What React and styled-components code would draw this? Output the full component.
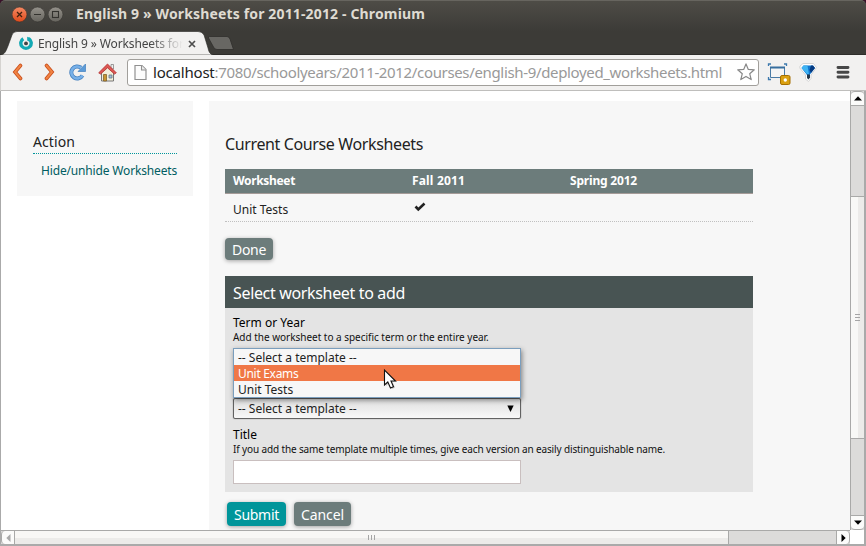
import React from 'react';
import styled, { createGlobalStyle } from 'styled-components';

const Global = createGlobalStyle`
  *, *::before, *::after { box-sizing: border-box; }
  body { margin: 0; overflow: hidden; font-family: "Noto Sans", sans-serif; font-size: 12px; color: #222; }
`;

/* ---------- window ---------- */
const Window = styled.div`
  width: 866px; height: 546px; display: flex; flex-direction: column; overflow: hidden;
  background: #3c3b37; border-radius: 5px 5px 0 0; box-shadow: 0 0 0 8px #3a1029;
`;
const TitleBar = styled.header`
  height: 31px; flex: none; display: flex; align-items: center; gap: 2px; padding: 0 0 4px 12px;
  background: linear-gradient(#4e4c46, #3c3b37); border-top: 1px solid #67655f;
  border-radius: 5px 5px 0 0;
`;
const WindowTitle = styled.h1`
  margin: 0 0 0 10px; font-size: 14px; line-height: 20px; letter-spacing: 0.147px; color: #dfdbd2; font-weight: 700;
`;
const TabStrip = styled.div`
  height: 24px; flex: none; display: flex; background: #3c3b37;
  border-bottom: 1px solid #2e2d2a;
`;
const Tab = styled.div`
  position: relative; width: 213px; height: 24px; flex: none; display: flex; align-items: center;
  padding: 1px 0 0 18px;
`;
const TabShape = styled.svg`position: absolute; left: 0; top: 0;`;
const TabIcon = styled.svg`position: relative; flex: none;`;
const TabTitle = styled.span`
  position: relative; margin-left: 5px; width: 146px; overflow: hidden; white-space: nowrap;
  line-height: 18px; letter-spacing: -0.12px; color: #444;
  mask-image: linear-gradient(90deg, #000 112px, transparent 145px);
`;
const TabClose = styled.svg`position: relative; margin-left: 4px;`;
const NewTab = styled.svg`margin: 4px 0 0 -7px; position: relative;`;

const Toolbar = styled.nav`
  height: 36px; flex: none; display: flex; align-items: center; padding: 0 0 1px 10px;
  background: #f2f1f0; border-bottom: 1px solid #bfbebc; border-left: 1px solid #d5d3d0;
`;
const NavIcon = styled.svg`flex: none; margin-right: ${p => p.$gap || 0}px;`;
const AddressBar = styled.div`
  width: 632px; height: 27px; display: flex; align-items: center; padding: 0 3px 0 6px;
  background: #fff; border: 1px solid #a19f9b; border-radius: 3px;
`;
const Url = styled.span`
  flex: 1; margin-left: 6px; font-size: 15px; line-height: 22px; letter-spacing: -0.345px; color: #999; white-space: nowrap;
`;
const Host = styled.span`color: #222; letter-spacing: -0.2px;`;

/* ---------- viewport and scrollbars ---------- */
const Body = styled.div`
  flex: 1; min-height: 0; display: grid; grid-template-columns: 849px 14px; grid-template-rows: 439px 14px;
  background: #fff; border: solid #aaa; border-width: 0 2px 2px 1px;
`;
const Viewport = styled.main`display: flex; gap: 16px; padding: 10px 0 0 16px; overflow: hidden; background: #fff;`;
const VScroll = styled.div`
  display: flex; flex-direction: column; background: #dcdbda; border-left: 1px solid #a9a9a8;
`;
const HScroll = styled.div`display: flex; background: #dcdbda; border-top: 1px solid #a9a9a8;`;
const VButton = styled.div`
  height: 15px; flex: none; display: flex; align-items: center; justify-content: center; background: #fbfbfa;
  border: solid #a9a9a8; border-width: 1px 0;
  border-radius: ${p => (p.$end ? '0 0 4px 4px' : '4px 4px 0 0')};
`;
const HButton = styled.div`
  width: 14px; flex: none; display: flex; align-items: center; justify-content: center; background: #fbfbfa;
  border: solid #a9a9a8; border-width: 0 1px;
  border-radius: ${p => (p.$end ? '0 4px 4px 0' : '4px 0 0 4px')};
`;
const Track = styled.div`flex: ${p => p.$grow || 'none'}; height: ${p => p.$h || 0}px;`;
const VThumb = styled.div`
  height: 243px; flex: none; display: flex; flex-direction: column; align-items: center; justify-content: center; gap: 2px;
  background: linear-gradient(90deg, #f8f8f6 7px, #ecebe9 7px); border: solid #a9a9a8; border-width: 1px 0;
`;
const HThumb = styled.div`
  width: 714px; flex: none; display: flex; align-items: center; justify-content: center; gap: 2px;
  background: linear-gradient(#f8f7f5 7px, #ecebe9 7px); border-right: 1px solid #a9a9a8;
`;
const Grip = styled.i`
  width: ${p => (p.$v ? 1 : 5)}px; height: ${p => (p.$v ? 5 : 1)}px; background: #a5a5a5;
`;
const Corner = styled.div`background: #fff;`;

/* ---------- page ---------- */
const Sidebar = styled.aside`
  width: 176px; height: 95px; flex: none; padding: 30px 16px 0; background: #f7f7f7;
`;
const SideTitle = styled.h2`
  margin: 0 0 8px; height: 23px; font-size: 14px; line-height: 21px; font-weight: 400; letter-spacing: 0.09px;
  border-bottom: 1px dotted #00959a;
`;
const SideLink = styled.a`
  display: block; padding-left: 8px; line-height: 18px; letter-spacing: -0.161px; color: #005d62; white-space: nowrap;
`;
const Content = styled.section`flex: 1; padding: 30px 97px 0 16px; background: #f7f7f7;`;
const Heading = styled.h2`
  margin: 0 0 12px; font-size: 16px; line-height: 26px; font-weight: 400; letter-spacing: -0.372px;
`;
const Table = styled.div`display: flex; flex-direction: column;`;
const Row = styled.div`
  display: grid; grid-template-columns: 179px 158px 191px; height: 28px; align-items: center;
  padding-top: 4px; border-bottom: 1px dotted #c0c0c0;
`;
const HeadRow = styled(Row)`
  height: 25px; padding: 0 0 1px; font-weight: 700; color: #fff; background: #6c7c7b; border-bottom: 1px solid #a59b98;
`;
const Cell = styled.div`padding-left: 8px; line-height: 18px; letter-spacing: ${p => p.$ls || 0}px;`;
const Check = styled.svg`display: block; margin: -5px 0 0 2px;`;
const Button = styled.button`
  height: ${p => p.$h || 24}px; width: ${p => p.$w}px; padding: 1px 0 0; border: 0; border-radius: 4px; color: #fff;
  background: ${p => (p.$primary ? '#00959a' : '#6c7c7b')}; box-shadow: 0 1px 4px rgba(0,0,0,.35);
  font: 14px/21px "Noto Sans", sans-serif; letter-spacing: ${p => p.$ls}px; text-align: center;
`;
const TableActions = styled.div`display: flex; margin-top: 16px;`;
const Form = styled.form`margin-top: 16px;`;
const FormTitle = styled.h3`
  margin: 0; height: 32px; padding: 0 8px; font-size: 16px; line-height: 34px; font-weight: 400; letter-spacing: -0.339px;
  color: #fff; background: #485453;
`;
const Fields = styled.div`height: 184px; padding: 7px 8px 0; background: #e4e4e4;`;
const Label = styled.label`display: block; height: 15px; line-height: 15px; color: #000;`;
const Hint = styled.div`
  height: 14px; font-size: 10px; line-height: 14px; letter-spacing: ${p => p.$ls}px; color: #111; white-space: nowrap;
`;
const SelectGroup = styled.div`position: relative; width: 288px; margin: 54px 0 8px;`;
const Select = styled.div`
  height: 21px; display: flex; align-items: center; justify-content: space-between; padding: 0 6px 0 4px;
  border: 1px solid #626262; border-radius: 2px; background: linear-gradient(#dedede, #f8f8f8);
  box-shadow: 0 0 1px #555; line-height: 18px;
`;
const Menu = styled.ul`
  position: absolute; left: 0; top: -50px; width: 288px; height: 50px; margin: 0; padding: 0; list-style: none;
  background: #f7f7f7; border: 1px solid #7b9ebd; box-shadow: 1px 2px 5px rgba(0,0,0,.45);
`;
const Option = styled.li`
  height: 16px; padding: 1px 0 0 4px; line-height: 15px; letter-spacing: ${p => p.$ls || 0}px;
  color: ${p => (p.$active ? '#fff' : '#222')}; background: ${p => (p.$active ? '#f07746' : 'transparent')};
`;
const Pointer = styled.svg`position: absolute; left: 150px; top: -29px; overflow: visible;`;
const Input = styled.input`
  display: block; width: 288px; height: 24px; margin-top: 4px; padding: 0 4px; border: 1px solid #c9bfbf; background: #fff;
`;
const FormActions = styled.div`display: flex; gap: 8px; padding: 10px 2px;`;

function WinButton({ kind }) {
  const close = kind === 'close';
  return (
    <svg width="16" height="18" viewBox="0 0 16 18">
      <defs>
        <linearGradient id={'wb' + kind} x1="0" y1="0" x2="0" y2="1">
          <stop offset="0" stopColor={close ? '#f58a64' : '#94918a'} />
          <stop offset="1" stopColor={close ? '#e04a1b' : '#66645e'} />
        </linearGradient>
      </defs>
      <circle cx="7.5" cy="9.5" r="7.400" fill={'url(#wb' + kind + ')'} stroke="#32312d" strokeWidth=".5" />
      {close && <path d="M5 7l5 5M10 7l-5 5" stroke="#42210f" strokeWidth="1.3" />}
      {kind === 'min' && <path d="M4 9.500h7" stroke="#33322e" strokeWidth="1.2" />}
      {kind === 'max' && <rect x="4.500" y="6.500" width="6" height="6" fill="none" stroke="#33322e" strokeWidth="1.1" />}
    </svg>
  );
}

export default function App() {
  return (
    <Window>
      <Global />
      <TitleBar>
        <WinButton kind="close" />
        <WinButton kind="min" />
        <WinButton kind="max" />
        <WindowTitle>English 9 » Worksheets for 2011-2012 - Chromium</WindowTitle>
      </TitleBar>
      <TabStrip>
        <Tab>
          <TabShape width="213" height="24" viewBox="0 0 213 24">
            <path d="M1 24C5 23 6 20 8 15L12 4Q13 .5 17 .5H198Q202 .5 204 4L208 17Q209 23 213 24Z" fill="#f2f1f0" stroke="#292825" strokeWidth=".6" />
          </TabShape>
          <TabIcon width="15" height="15" viewBox="0 0 15 15">
            <path d="M5.300 2.700A5.200 5.200 0 1 0 10.700 2.700" fill="none" stroke="#13a9b4" strokeWidth="3.400" />
            <path d="M9.200 .800L12.500 2 11 5.500 9.200 4.500Z" fill="#13a9b4" />
            <circle cx="8" cy="7.400" r="1.900" fill="#444" />
          </TabIcon>
          <TabTitle>English 9 » Worksheets for</TabTitle>
          <TabClose width="8" height="8" viewBox="0 0 8 8">
            <path d="M1 1l6 6M7 1l-6 6" stroke="#4e4e4e" strokeWidth="1.7" />
          </TabClose>
        </Tab>
        <NewTab width="30" height="17" viewBox="0 0 30 17">
          <path d="M3.500 1.500H21Q23 1.500 24 4L27.500 14.500H11Q8.500 14.500 7.500 12L2.500 3Q2 1.500 3.500 1.500Z" fill="#686763" stroke="#302f2c" strokeWidth=".8" />
        </NewTab>
      </TabStrip>
      <Toolbar>
        <NavIcon $gap={18} width="14" height="18" viewBox="0 0 14 18">
          <path d="M9.500 2.500L4 9l5.500 6.500" fill="none" stroke="#c84d1c" strokeWidth="3.600" strokeLinecap="round" />
          <path d="M9.500 2.500L4 9l5.500 6.500" fill="none" stroke="#f18443" strokeWidth="2" strokeLinecap="round" />
        </NavIcon>
        <NavIcon $gap={12} width="14" height="18" viewBox="0 0 14 18">
          <path d="M3.500 2.500L9 9l-5.500 6.500" fill="none" stroke="#c84d1c" strokeWidth="3.600" strokeLinecap="round" />
          <path d="M3.500 2.500L9 9l-5.500 6.500" fill="none" stroke="#f18443" strokeWidth="2" strokeLinecap="round" />
        </NavIcon>
        <NavIcon $gap={12} width="17" height="18" viewBox="0 0 17 18">
          <path d="M12 4.700A6 6 0 1 0 13.500 12.500" fill="none" stroke="#437fbd" strokeWidth="4" />
          <path d="M16.500 1v7.500H9Z" fill="#5c9bd8" stroke="#437fbd" strokeWidth=".7" />
          <path d="M12 4.700A6 6 0 1 0 13.500 12.500" fill="none" stroke="#77b0e8" strokeWidth="2.600" />
        </NavIcon>
        <NavIcon $gap={10} width="19" height="19" viewBox="0 0 19 19">
          <path d="M3.500 9.500L9.500 4l6 5.500V18h-12Z" fill="#f2eeda" stroke="#777" />
          <path d="M13 1.500h2.500V6H13Z" fill="#eee" stroke="#777" strokeWidth=".7" />
          <path d="M.7 9.800L9.500 1l8.800 8.800-1.800 1.300-7-6.300-7 6.300Z" fill="#dc5753" stroke="#b4302e" strokeWidth=".8" />
          <path d="M5.500 11.500h3V18h-3Z" fill="#c99530" stroke="#755721" strokeWidth=".7" />
          <path d="M11 12h3v3h-3Z" fill="#9ebddd" stroke="#6d7880" strokeWidth=".8" />
        </NavIcon>
        <AddressBar>
          <NavIcon width="13" height="17" viewBox="0 0 13 17">
            <path d="M1 1.500h7l4 4v10H1Z" fill="#fcfcfc" stroke="#909090" strokeWidth="1.200" />
            <path d="M7.500 1.500V6H12" fill="#eee" stroke="#909090" strokeWidth="1.100" />
          </NavIcon>
          <Url><Host>localhost</Host>:7080/schoolyears/2011-2012/courses/english-9/deployed_worksheets.html</Url>
          <NavIcon width="18" height="18" viewBox="0 0 18 18">
            <path d="M9 .9l2.300 5.500 6 .4-4.600 3.900 1.500 5.900L9 13.400l-5.200 3.200 1.500-5.900L.7 6.800l6-.4Z" fill="#fff" stroke="#888" strokeWidth="1.200" strokeLinejoin="round" />
          </NavIcon>
        </AddressBar>
        <NavIcon $gap={8} width="32" height="26" viewBox="0 0 32 26">
          <path d="M9.500 7V5h2.500M25 5h2.500v2M9.500 18v2.500h2.500" fill="none" stroke="#3d79ad" strokeWidth="1.300" />
          <path d="M11.500 8.500h14v10h-14Z" fill="#f5f5f5" stroke="#4a7ba5" strokeWidth="1" />
          <path d="M11 8.500h15" stroke="#376e9e" strokeWidth="2" />
          <rect x="21.500" y="16.500" width="9.500" height="9" rx="1.500" fill="#daa010" stroke="#a66f00" />
          <circle cx="26.300" cy="21" r="1.700" fill="#fff" />
        </NavIcon>
        <NavIcon $gap={19} width="18" height="20" viewBox="0 0 18 20">
          <path d="M4 1.500h10.500L17.500 5.500 12 13v3.500L9.500 19.500 6.500 17V13L.8 6 1 4Z" fill="#fff" stroke="#d4d4d4" />
          <path d="M4.500 3.500h9.500L16 6 10.500 13h-2.500L2.500 6Z" fill="#1277d0" />
          <path d="M4.500 3.500h4L10 12.500 8 12 2.500 6Z" fill="#3fb4f3" />
          <path d="M12 3.500h2L16 6l-4 5-1.500-3Z" fill="#063a80" />
          <path d="M8 12.500h3v3L9.500 17.500 8 16Z" fill="#26384a" />
        </NavIcon>
        <NavIcon width="14" height="14" viewBox="0 0 14 14">
          <path d="M2 2.500h10M2 7.300h10M2 12h10" stroke="#474747" strokeWidth="2.900" strokeLinecap="round" />
        </NavIcon>
      </Toolbar>
      <Body>
        <Viewport>
          <Sidebar>
            <SideTitle>Action</SideTitle>
            <SideLink>Hide/unhide Worksheets</SideLink>
          </Sidebar>
          <Content>
            <Heading>Current Course Worksheets</Heading>
            <Table>
              <HeadRow>
                <Cell $ls={-0.336}>Worksheet</Cell>
                <Cell $ls={0.166}>Fall 2011</Cell>
                <Cell $ls={-0.192}>Spring 2012</Cell>
              </HeadRow>
              <Row>
                <Cell>Unit Tests</Cell>
                <Cell>
                  <Check width="12" height="10" viewBox="0 0 12 10">
                    <path d="M1.500 4.500L4.300 7.500 10.500 1.500" fill="none" stroke="#222" strokeWidth="2.600" />
                  </Check>
                </Cell>
                <Cell />
              </Row>
            </Table>
            <TableActions>
              <Button $w={48} $h={22} $ls={-0.309}>Done</Button>
            </TableActions>
            <Form>
              <FormTitle>Select worksheet to add</FormTitle>
              <Fields>
                <Label>Term or Year</Label>
                <Hint $ls={-0.02}>Add the worksheet to a specific term or the entire year.</Hint>
                <SelectGroup>
                  <Select>
                    -- Select a template --
                    <svg width="7" height="8" viewBox="0 0 7 8"><path d="M.3.500h6.400L3.500 7Z" fill="#000" /></svg>
                  </Select>
                  <Menu>
                    <Option>-- Select a template --</Option>
                    <Option $active $ls={-0.3}>Unit Exams</Option>
                    <Option>Unit Tests</Option>
                  </Menu>
                  <Pointer width="15" height="22" viewBox="0 0 15 22">
                    <path d="M2 1.500V16l3.300-3 2.700 6 3-1.300L8.500 12H13Z" fill="#777" opacity=".35" transform="translate(1 1)" />
                    <path d="M1.500 1V16l3.300-3 2.700 6 3-1.300L8 12h4.500Z" fill="#fff" stroke="#111" strokeWidth="1.100" />
                  </Pointer>
                </SelectGroup>
                <Label>Title</Label>
                <Hint $ls={-0.13}>If you add the same template multiple times, give each version an easily distinguishable name.</Hint>
                <Input />
              </Fields>
              <FormActions>
                <Button type="button" $primary $w={59} $ls={-0.284}>Submit</Button>
                <Button type="button" $w={57} $ls={-0.097}>Cancel</Button>
              </FormActions>
            </Form>
          </Content>
        </Viewport>
        <VScroll>
          <VButton><svg width="8" height="5" viewBox="0 0 8 5"><path d="M0 4.500L4 .300 8 4.500Z" /></svg></VButton>
          <Track $h={90} />
          <VThumb><Grip /><Grip /><Grip /></VThumb>
          <Track $grow={1} />
          <VButton $end><svg width="8" height="5" viewBox="0 0 8 5"><path d="M0 .500h8L4 4.700Z" /></svg></VButton>
        </VScroll>
        <HScroll>
          <HButton><svg width="5" height="8" viewBox="0 0 5 8"><path d="M4.500 0v8L.300 4Z" fill="#aaa" /></svg></HButton>
          <HThumb><Grip $v /><Grip $v /><Grip $v /></HThumb>
          <Track $grow={1} />
          <HButton $end><svg width="5" height="8" viewBox="0 0 5 8"><path d="M.500 0v8L4.700 4Z" /></svg></HButton>
        </HScroll>
        <Corner />
      </Body>
    </Window>
  );
}
